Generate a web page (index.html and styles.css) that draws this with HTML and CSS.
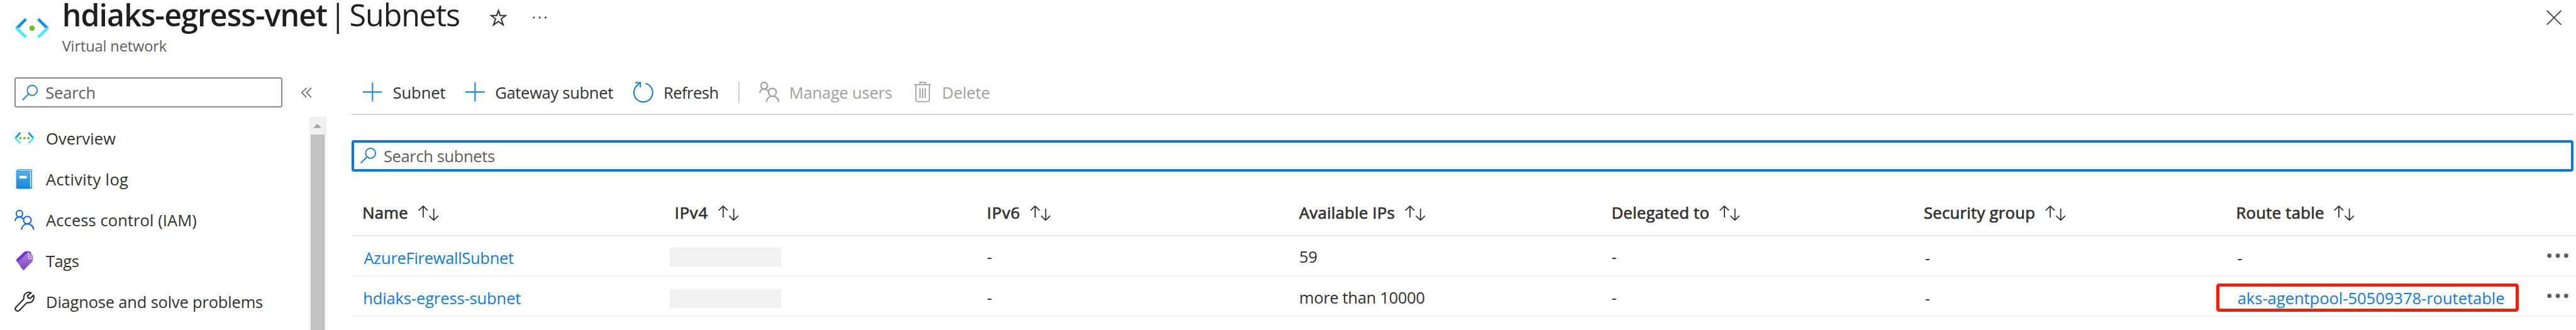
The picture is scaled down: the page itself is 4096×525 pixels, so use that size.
FILE: index.html
```html
<!DOCTYPE html>
<html lang="en">
<head>
<meta charset="utf-8">
<title>hdiaks-egress-vnet | Subnets</title>
<link rel="stylesheet" href="styles.css">
</head>
<body>
<svg class="defs" aria-hidden="true">
  <symbol id="i-sort" viewBox="0 0 35 26"><path d="M8.5 20.500V1.500M.8 8.500 8.500 1l7.700 7.500M26.500 5.500v19M18.800 17.500l7.700 7.500 7.700-7.500" fill="none" stroke="#323130" stroke-width="1.900"/></symbol>
  <symbol id="i-search" viewBox="0 0 27 27"><circle cx="17.500" cy="9.500" r="8.600" fill="none" stroke="#0f7cd8" stroke-width="1.900"/><path d="M11.500 15.500.8 26.200" stroke="#0f7cd8" stroke-width="2.100"/></symbol>
  <symbol id="i-plus" viewBox="0 0 33 33"><path d="M16.500 0v33M0 16.500h33" stroke="#1b86dd" stroke-width="2.200"/></symbol>
  <symbol id="i-users" viewBox="0 0 34 34"><g fill="none" stroke="currentColor" stroke-width="2.200"><circle cx="8.500" cy="6.500" r="5.500"/><path d="M1 19c.5-4.500 3.500-7 7.500-7 3 0 5 1.300 6.500 3.500"/><circle cx="22" cy="17.500" r="6.500"/><path d="M12 34c.5-6 4.500-10 10-10s10.500 4 11 10"/></g></symbol>
  <symbol id="i-more" viewBox="0 0 37 8"><g fill="#605e5c"><circle cx="4" cy="4" r="3.700"/><circle cx="18.300" cy="4" r="3.700"/><circle cx="32.600" cy="4" r="3.700"/></g></symbol>
</svg>
<div class="page">
  <header class="header">
    <svg class="vnet-logo" viewBox="0 0 58 34">
      <g fill="none" stroke-width="5"><path d="M18.500 1.500 2.500 17.500" stroke="#1490df"/><path d="M2 16.500l16.500 16" stroke="#50e6ff"/><path d="M39.500 1.500l16 16" stroke="#1490df"/><path d="M56 16.500l-16.500 16" stroke="#50e6ff"/></g>
      <circle cx="29" cy="17" r="4.700" fill="#76bc2d"/>
    </svg>
    <div class="titles">
      <h1 class="title"><span class="t name">hdiaks-egress-vnet</span><span class="t bar">|</span><span class="t section">Subnets</span>
        <svg class="star" viewBox="0 0 29 30"><path d="M14.500 3l3 8.500h9.300l-7.400 5.700 3.300 10.300-8.200-5.800-8.200 5.800 3.300-10.300L2.200 11.500h9.300z" fill="none" stroke="#323130" stroke-width="2.200"/></svg>
        <svg class="dots" viewBox="0 0 24 4"><path d="M.5.500h3v3h-3zM10.500.500h3v3h-3zM20.500.500h3v3h-3z" fill="#484644"/></svg>
      </h1>
      <p class="subtitle"><span class="t">Virtual network</span></p>
    </div>
    <svg class="close" viewBox="0 0 26 26"><path d="M.8.800l24.400 24.400M25.200.800.8 25.200" stroke="#484644" stroke-width="2"/></svg>
  </header>
  <div class="body">
    <aside class="sidebar">
      <div class="side-top">
        <div class="side-search"><svg class="i-search"><use href="#i-search"/></svg><span class="t">Search</span></div>
        <svg class="collapse" viewBox="0 0 18 18"><path d="M9 .8.900 9 9 17.200M17.200.800 9.100 9l8.100 8.200" fill="none" stroke="#605e5c" stroke-width="1.600"/></svg>
      </div>
      <div class="side-scroll">
        <nav class="nav">
          <a class="nav-item"><svg class="nav-icon" viewBox="0 0 34 34"><g fill="none" stroke-width="3"><path d="M10 7.500 1.500 17" stroke="#1490df"/><path d="M1.500 16.500 10 26" stroke="#50e6ff"/><path d="M24 7.500l8.500 9.500" stroke="#1490df"/><path d="M32.500 16.500 24 26" stroke="#50e6ff"/></g><g fill="#76bc2d"><circle cx="10" cy="17" r="2.200"/><circle cx="17" cy="17" r="2.200"/><circle cx="24" cy="17" r="2.200"/></g></svg><span class="t">Overview</span></a>
          <a class="nav-item activity"><svg class="nav-icon" viewBox="0 0 34 34"><defs><linearGradient id="g-log" x2="0" y2="1"><stop stop-color="#50b0f0"/><stop offset="1" stop-color="#1484d8"/></linearGradient></defs><path d="M6 .5h22q2 0 2 2v29q0 2-2 2H5q-2 0-2-2v-28z" fill="#1a80cf"/><path d="M6.500 1.800h22v29l-2 1.500V3.300H5.500z" fill="#e4f2fc"/><path d="M3 4h22.500q1 0 1 1v28.500H5q-2 0-2-2z" fill="url(#g-log)"/><path d="M8.500 11.500h12.500v4.500H8.500z" fill="#fff"/></svg><span class="t">Activity log</span></a>
          <a class="nav-item access"><svg class="nav-icon iam"><use href="#i-users"/></svg><span class="t">Access control (IAM)</span></a>
          <a class="nav-item tags"><svg class="nav-icon" viewBox="0 0 34 34"><defs><linearGradient id="g-tag" x2="0" y2="1"><stop stop-color="#b080e4"/><stop offset="1" stop-color="#7343b4"/></linearGradient></defs><path d="M2.500 15.500 16 2.500q2-2 4.500-2l5 .5q2.500.5 3 3L29 9 6 21z" fill="#7332d8"/><path d="M5.500 19.500 19 6.500q2-2 4.500-1.500l5 1q2.500.5 3 3v6q0 2-1.500 4L15.500 33.500q-5-5-10-14z" fill="url(#g-tag)"/><circle cx="26.500" cy="11.500" r="2.200" fill="#7332d8" stroke="#fff" stroke-width="1.200"/><path d="M22.500 3.500q3 1 2.500 4" fill="none" stroke="#fff" stroke-width="1.500"/></svg><span class="t">Tags</span></a>
          <a class="nav-item diagnose"><svg class="nav-icon" viewBox="0 0 34 34"><path d="M28.500 2C23.500-.5 16 2.500 16 9.500c0 2 .2 3-.8 4L2.500 26.500C-1 30.500 4.500 35.500 8.500 32L20.500 19.500c1-1 2-.8 4-.8 7 0 10-7 8-12.700L27 11.500l-3.800-.9-.9-3.800z" fill="none" stroke="#252423" stroke-width="2.200" stroke-linejoin="round"/></svg><span class="t">Diagnose and solve problems</span></a>
        </nav>
        <div class="scrollbar"><svg class="scroll-up" viewBox="0 0 14 7"><path d="M7 0l7 7H0z" fill="#a3a3a3"/></svg><div class="thumb"></div></div>
      </div>
    </aside>
    <main class="main">
      <div class="toolbar">
        <button class="cmd"><svg class="i-plus"><use href="#i-plus"/></svg><span class="t">Subnet</span></button>
        <button class="cmd gateway"><svg class="i-plus"><use href="#i-plus"/></svg><span class="t">Gateway subnet</span></button>
        <button class="cmd refresh"><svg class="i-cmd" viewBox="0 0 36 35"><path d="M22.500 2.500A16.500 16.500 0 1 1 9.500 4.800" fill="none" stroke="#0f7cd8" stroke-width="2.200"/><path d="M4.500 1.200h9V9.500" fill="none" stroke="#0f7cd8" stroke-width="2.200"/><path d="M7 6.500l6-5" stroke="#0f7cd8" stroke-width="2"/></svg><span class="t">Refresh</span></button>
        <span class="sep"></span>
        <button class="cmd disabled users"><svg class="i-cmd"><use href="#i-users"/></svg><span class="t">Manage users</span></button>
        <button class="cmd disabled delete"><svg class="i-trash" viewBox="0 0 28 35"><path d="M0 5h28M9.500 5V1h9v4M2.500 5v26q0 3 3 3h17q3 0 3-3V5M9.500 11v17M14 11v17M18.500 11v17" fill="none" stroke="#a19f9d" stroke-width="2"/></svg><span class="t">Delete</span></button>
      </div>
      <div class="filter"><svg class="i-search"><use href="#i-search"/></svg><span class="t">Search subnets</span></div>
      <div class="table">
        <div class="row head">
          <div class="cell"><span class="t">Name</span><svg class="sort"><use href="#i-sort"/></svg></div>
          <div class="cell ip"><span class="t">IPv4</span><svg class="sort"><use href="#i-sort"/></svg></div>
          <div class="cell ip"><span class="t">IPv6</span><svg class="sort"><use href="#i-sort"/></svg></div>
          <div class="cell"><span class="t">Available IPs</span><svg class="sort"><use href="#i-sort"/></svg></div>
          <div class="cell"><span class="t">Delegated to</span><svg class="sort"><use href="#i-sort"/></svg></div>
          <div class="cell"><span class="t">Security group</span><svg class="sort"><use href="#i-sort"/></svg></div>
          <div class="cell"><span class="t">Route table</span><svg class="sort"><use href="#i-sort"/></svg></div>
        </div>
        <div class="row first">
          <div class="cell low"><a class="t link azure">AzureFirewallSubnet</a></div>
          <div class="cell"><span class="masked"></span></div>
          <div class="cell"><span class="t">-</span></div>
          <div class="cell"><span class="t">59</span></div>
          <div class="cell"><span class="t">-</span></div>
          <div class="cell low inset"><span class="t">-</span></div>
          <div class="cell low inset"><span class="t">-</span></div>
          <svg class="more"><use href="#i-more"/></svg>
        </div>
        <div class="row second">
          <div class="cell low"><a class="t link">hdiaks-egress-subnet</a></div>
          <div class="cell"><span class="masked"></span></div>
          <div class="cell"><span class="t">-</span></div>
          <div class="cell"><span class="t">more than 10000</span></div>
          <div class="cell"><span class="t">-</span></div>
          <div class="cell low inset"><span class="t">-</span></div>
          <div class="cell low inset"><span class="marked"><a class="t route">aks-agentpool-50509378-routetable</a></span></div>
          <svg class="more"><use href="#i-more"/></svg>
        </div>
      </div>
    </main>
  </div>
</div>
</body>
</html>
```
FILE: styles.css
```css
/* 1rem is ten design pixels of a 4400px wide layout */
html { font-size: calc(100vw / 440); }
* { box-sizing: border-box; }
body { margin: 0; background: #fff; color: #323130; font-family: "Open Sans", "Noto Sans", sans-serif; overflow: hidden; }
svg { display: block; flex: none; overflow: visible; }
.defs { width: 0; height: 0; position: absolute; }
.page { width: 440rem; height: 56.4rem; display: flex; flex-direction: column; font-size: 2.75rem; line-height: 4rem; white-space: nowrap; }
.t { letter-spacing: -0.008em; padding-top: .2rem; }

.header { display: flex; height: 11rem; flex: none; padding: 0 2.4rem 0 2.6rem; }
.vnet-logo { width: 5.8rem; height: 3.4rem; margin-top: 3.1rem; }
.titles { flex: 1; margin-left: 2.2rem; }
.title { display: flex; margin: 0; font-size: 5.2rem; line-height: 5rem; font-weight: 400; color: #201f1e; }
.title .t { letter-spacing: -0.022em; padding: 0; }
.title .name { font-weight: 600; letter-spacing: -0.02em; }
.title .bar { margin-left: .4rem; }
.title .section { margin-left: .65rem; }
.star { width: 2.9rem; height: 3rem; margin: 1.5rem 0 0 5.1rem; }
.dots { width: 2.4rem; height: .4rem; margin: 2.8rem 0 0 4.5rem; }
.subtitle { margin: .9rem 0 0; font-size: 2.55rem; line-height: 4rem; color: #605e5c; }
.close { width: 2.6rem; height: 2.6rem; margin-top: 1.75rem; }

.body { display: flex; flex: 1; min-height: 0; }
.sidebar { width: 60.1rem; flex: none; display: flex; flex-direction: column; }
.side-top { display: flex; align-items: center; height: 5.2rem; margin: 2.2rem 0 1.6rem 2.45rem; flex: none; }
.side-search { display: flex; align-items: center; width: 45.8rem; height: 5.2rem; border: 2px solid #8a8886; border-radius: .4rem; padding-left: 1.1rem; color: #605e5c; }
.i-search { width: 2.7rem; height: 2.7rem; margin-right: 1.3rem; }
.collapse { width: 1.8rem; height: 1.8rem; margin-left: 3.2rem; }
.side-scroll { display: flex; flex: 1; min-height: 0; }
.nav { width: 52.8rem; padding: .15rem 0 0 2.45rem; }
.nav-item { display: flex; align-items: center; height: 6.97rem; gap: 2rem; }
.nav-item .t { letter-spacing: 0; }
.activity .t { letter-spacing: .012em; }
.access .t { letter-spacing: .002em; }
.tags .t { letter-spacing: -0.02em; }
.diagnose .t { letter-spacing: -0.009em; }
.nav-icon { width: 3.4rem; height: 3.4rem; }
.iam { color: #1565e0; }
.scrollbar { width: 2.9rem; background: #f1f1f1; display: flex; flex-direction: column; align-items: center; }
.scroll-up { width: 1.4rem; height: .7rem; margin: 1.2rem 0 1.1rem; flex: none; }
.thumb { width: 2.3rem; flex: 1; background: #c1c1c1; }

.main { flex: 1; display: flex; flex-direction: column; min-width: 0; }
.toolbar { display: flex; align-items: center; height: 7.6rem; margin: 1.1rem .4rem 0 0; padding-left: 1.9rem; border-bottom: 2px solid #d6d6d6; }
.cmd { display: flex; align-items: center; gap: 1.8rem; padding: 0; border: 0; background: none; font: inherit; color: #323130; }
.cmd svg { margin-bottom: .2rem; }
.cmd .t { letter-spacing: -0.004em; }
.i-plus { width: 3.3rem; height: 3.3rem; }
.i-cmd { width: 3.5rem; height: 3.5rem; }
.i-trash { width: 2.8rem; height: 3.5rem; }
.gateway { margin-left: 3.35rem; }
.gateway .t { letter-spacing: -0.013em; }
.refresh { margin-left: 3.3rem; }
.refresh .t { letter-spacing: -0.022em; }
.sep { width: 2px; height: 3.7rem; margin: 0 3.35rem 0 3.4rem; background: #d2d0ce; }
.disabled { color: #a19f9d; }
.users { gap: 1.6rem; }
.users .t { letter-spacing: -0.01em; }
.delete { margin-left: 3.8rem; gap: 1.9rem; }
.filter { display: flex; align-items: center; height: 5.3rem; margin: 4.3rem .4rem 0 0; border: 4px solid #0a78d6; border-radius: .4rem; padding-left: 1rem; color: #605e5c; }
.filter .t { letter-spacing: -0.016em; }

.table { margin-top: 3rem; }
.row { display: grid; grid-template-columns: repeat(6, 53.34rem) 53.2rem auto; align-items: center; padding-left: 1.8rem; border-bottom: 2px solid #f3f2f1; }
.row .t { letter-spacing: -0.014em; }
.head { height: 8.15rem; border-color: #edebe9; }
.head .t { letter-spacing: .012em; -webkit-text-stroke: .08rem #323130; }
.head .ip .t { letter-spacing: .03em; }
.first { height: 6.8rem; }
.second { height: 6.95rem; }
.cell { display: flex; align-items: center; padding-top: .1rem; }
.second .cell { padding-top: .3rem; }
.row .low { padding-top: .5rem; }
.inset { padding-left: .2rem; }
.sort { width: 3.5rem; height: 2.6rem; margin: .3rem 0 0 1.7rem; }
.link, .route { color: #0f7cd8; }
.row .link { padding-left: .1rem; letter-spacing: -0.006em; }
.row .azure { padding-left: .25rem; letter-spacing: -0.013em; }
.row .route { letter-spacing: -0.002em; }
.masked { width: 19rem; height: 3.2rem; margin: .3rem 0 0 -.8rem; background: #f1f1f1; }
.second .masked { margin-top: .6rem; }
.marked { display: flex; align-items: center; width: 51.7rem; height: 4.9rem; margin-left: -3.6rem; padding-left: 3.1rem; border: 5px solid #ff1a0c; border-radius: .5rem; }
.more { width: 3.7rem; height: .8rem; margin-left: -.05rem; }
```
